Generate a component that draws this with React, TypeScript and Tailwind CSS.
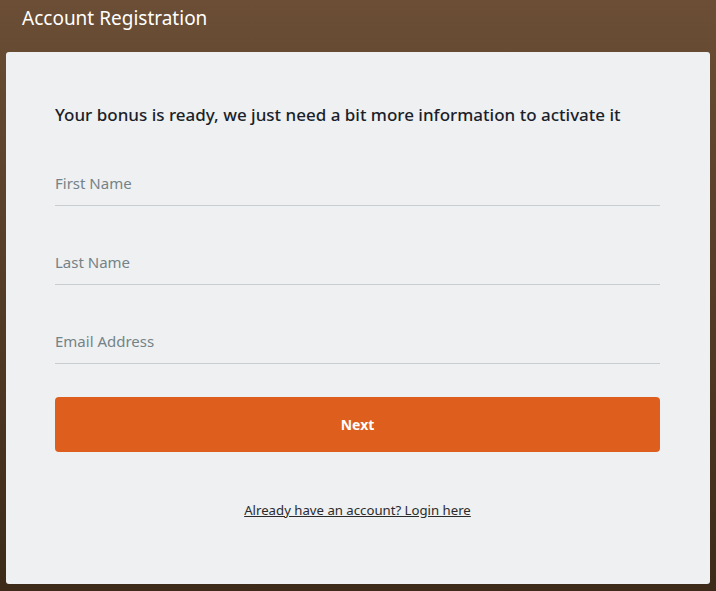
export default function App() {
  const font = { fontFamily: '"Noto Sans", "Open Sans", sans-serif' };
  return (
    <div
      className="w-[716px] h-[591px] bg-gradient-to-b from-[#6b4e35] to-[#3d2a19] flex flex-col"
      style={font}
    >
      <div className="h-[52px] px-[22px] pt-[4px] text-white text-[19px] leading-[28px]">
        Account Registration
      </div>
      <div className="mx-[6px] h-[532px] bg-[#eef0f2] rounded-[3px] pl-[49px] pr-[50px] pt-[49px] flex flex-col">
        <h1 className="text-[17px] leading-[28px] text-[#1b1f2a] font-medium">
          Your bonus is ready, we just need a bit more information to activate it
        </h1>
        <div className="flex flex-col mt-[33px]">
          {["First Name", "Last Name", "Email Address"].map((l, i) => (
            <div
              key={l}
              className={`h-[44px] border-b border-[#c8cdd1] flex items-center text-[15px] text-[#748387] ${i > 0 ? "mt-[35px]" : ""}`}
            >
              {l}
            </div>
          ))}
        </div>
        <button className="mt-[33px] h-[55px] w-full rounded-[4px] bg-[#dd5e1d] text-white text-[14px] font-bold">
          Next
        </button>
        <div className="mt-[45px] text-center">
          <a className="text-[13.2px] text-[#2b2b2b] underline">Already have an account? Login here</a>
        </div>
      </div>
    </div>
  );
}
